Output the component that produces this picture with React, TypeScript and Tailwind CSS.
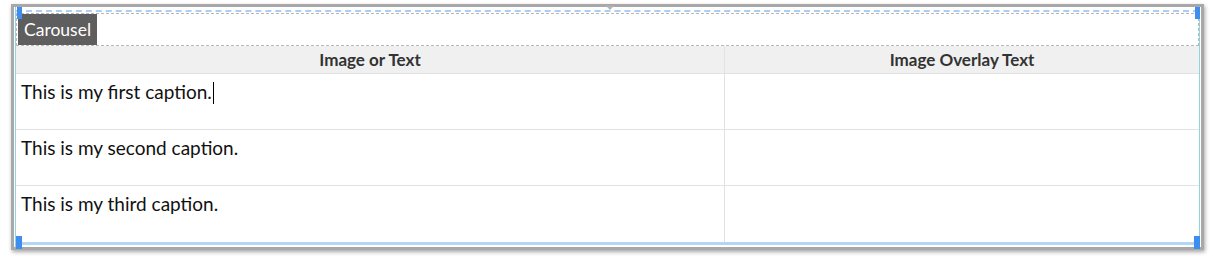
import React from "react";

const rows = [
  "This is my first caption.",
  "This is my second caption.",
  "This is my third caption.",
];

export default function App() {
  return (
    <div
      className="w-[1217px] h-[256px] bg-white pt-[4px] pl-[11px]"
      style={{ fontFamily: "Lato, 'Open Sans', sans-serif" }}
    >
      <div className="relative w-[1193px] h-[246px] border-[3px] border-[#a8a8a8] shadow-[1px_2px_4px_rgba(0,0,0,0.35)] bg-white">
        {/* top center notch */}
        <div className="absolute left-[592px] top-[-1px] w-0 h-0 border-l-[4px] border-r-[4px] border-t-[4px] border-l-transparent border-r-transparent border-t-[#b5b5b5]" />
        <div className="h-full mx-[1px] border-x border-[#8fd6dc] flex flex-col">
          <div className="h-[3px] shrink-0" />
          <div className="h-0 shrink-0 border-t-2 border-dashed border-[#a9cff5]" />
          <div className="h-[1px] shrink-0" />
          {/* label row */}
          <div className="h-[33px] shrink-0 border border-dashed border-[#b8b8b8] flex items-stretch">
            <div className="bg-[#5e5e5e] text-white text-[17.5px] leading-none px-[6px] flex items-center w-[79px] ml-[1px]">
              Carousel
            </div>
          </div>
          {/* table */}
          <div className="grid grid-cols-[709px_1fr] shrink-0">
            <div className="bg-[#f0f0f0] h-[28px] border-b-[1px] border-[#e2e2e2] border-r border-r-[#e2e2e2] flex items-center justify-center text-[17px] font-bold text-[#333]">
              Image or Text
            </div>
            <div className="bg-[#f0f0f0] h-[28px] border-b-[1px] border-[#e2e2e2] flex items-center justify-center text-[17px] font-bold text-[#333]">
              Image Overlay Text
            </div>
            {rows.map((r, i) => (
              <React.Fragment key={i}>
                <div
                  className={`h-[56px] px-[5px] pt-[5px] text-[19px] leading-[26px] text-[#111] border-r border-[#e2e2e2] ${
                    i < 2 ? "border-b border-b-[#e2e2e2]" : ""
                  }`}
                >
                  {r}
                  {i === 0 && (
                    <span className="inline-block w-[1px] h-[22px] bg-black align-[-5px] ml-[1px]" />
                  )}
                </div>
                <div
                  className={`h-[56px] ${i < 2 ? "border-b border-[#e2e2e2]" : ""}`}
                />
              </React.Fragment>
            ))}
          </div>
          <div className="h-[3px] shrink-0 bg-[#b3d5f7]" />
        </div>
        {/* handles */}
        <div className="absolute left-[3px] top-[0px] w-[5px] h-[12px] bg-[#3e8ef0]" />
        <div className="absolute right-[1px] top-[0px] w-[5px] h-[12px] bg-[#3e8ef0]" />
        <div className="absolute left-[2px] bottom-[-2px] w-[6px] h-[13px] bg-[#3e8ef0]" />
        <div className="absolute right-[1px] bottom-[-2px] w-[6px] h-[13px] bg-[#3e8ef0]" />
      </div>
    </div>
  );
}
